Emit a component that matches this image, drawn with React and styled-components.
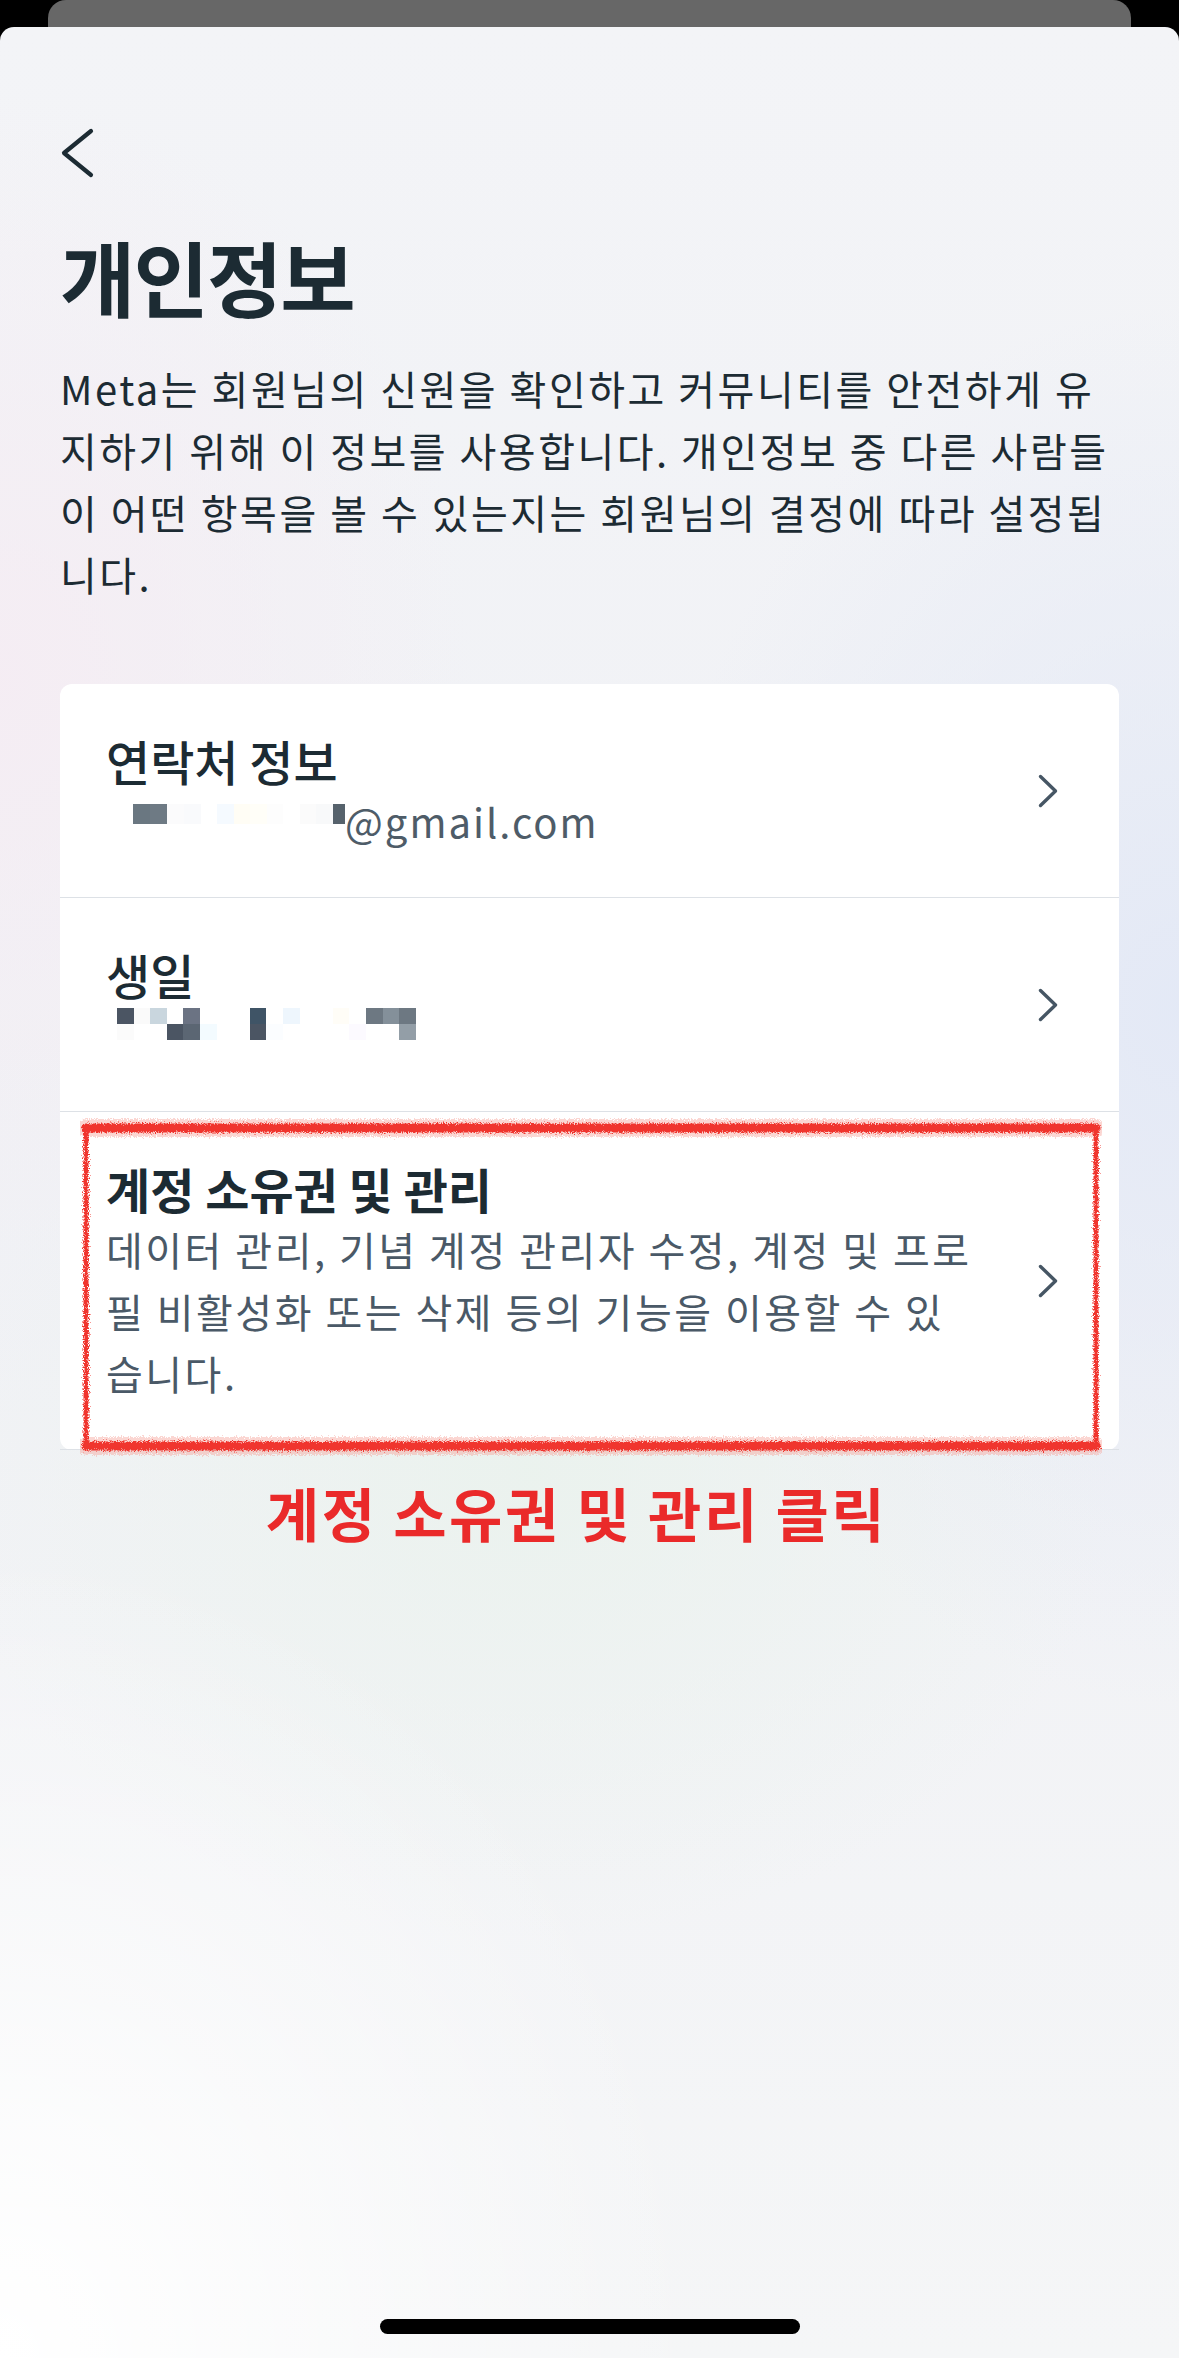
import React from "react";
import styled, { createGlobalStyle } from "styled-components";

const GlobalStyle = createGlobalStyle`
  html, body {
    margin: 0;
    padding: 0;
    background: #000;
  }
  body {
    font-family: "Noto Sans CJK KR", "Noto Sans", sans-serif;
    -webkit-font-smoothing: antialiased;
  }
  #root {
    width: 1179px;
  }
`;

const Screen = styled.div`
  width: 1179px;
  height: 2358px;
  background: #000;
  display: flex;
  flex-direction: column;
  overflow: hidden;
`;

const BehindCard = styled.div`
  flex-shrink: 0;
  height: 27px;
  margin: 0 48px;
  background: #676767;
  border-radius: 18px 18px 0 0;
`;

const Sheet = styled.div`
  flex: 1;
  display: flex;
  flex-direction: column;
  padding: 100px 60px 0;
  border-radius: 14px 14px 0 0;
  background-color: #f1f2f6;
  background-image:
    radial-gradient(ellipse 60% 35% at 0% 100%, #ffffff 0%, rgba(255, 255, 255, 0) 100%),
    radial-gradient(ellipse 50% 20% at 45% 62%, rgba(234, 242, 237, 0.9) 0%, rgba(234, 242, 237, 0) 100%),
    radial-gradient(ellipse 45% 30% at 100% 42%, rgba(226, 232, 246, 0.9) 0%, rgba(226, 232, 246, 0) 100%),
    radial-gradient(ellipse 40% 25% at 0% 28%, rgba(245, 236, 243, 0.9) 0%, rgba(245, 236, 243, 0) 100%),
    linear-gradient(180deg, #f3f4f7 0%, #f0f1f5 50%, #f5f6f7 100%);
`;

const BackButton = styled.button`
  align-self: flex-start;
  width: 34px;
  height: 52px;
  padding: 0;
  border: 0;
  background: transparent;
  display: flex;
  align-items: center;
  justify-content: flex-start;
`;

const Title = styled.h1`
  margin: 52px 0 0;
  font-size: 82px;
  line-height: 90px;
  font-weight: 700;
  letter-spacing: -2px;
  color: #1c2b33;
`;

const Intro = styled.p`
  margin: 36px 0 0;
  font-size: 40px;
  line-height: 62px;
  letter-spacing: 2.5px;
  font-weight: 400;
  color: #1c2b33;
  white-space: nowrap;
`;

const Card = styled.div`
  position: relative;
  margin-top: 79px;
  background: #ffffff;
  border-radius: 12px;
  display: flex;
  flex-direction: column;
`;

const Row = styled.div`
  display: flex;
  align-items: center;
  padding: 46px 60px 45px 46px;
  border-bottom: 1px solid #dde1e6;

  &:last-child {
    border-bottom: 0;
    padding-bottom: 46px;
  }
`;

const RowText = styled.div`
  flex: 1;
  display: flex;
  flex-direction: column;
  min-width: 0;
`;

const RowTitle = styled.div`
  font-size: 48px;
  line-height: 60px;
  letter-spacing: 0px;
  font-weight: ${(p) => (p.$strong ? 600 : 500)};
  color: #1c2b33;
`;

const RowSub = styled.div`
  font-size: 40px;
  line-height: 62px;
  letter-spacing: 2.5px;
  color: #4a5967;
  white-space: nowrap;
`;

const EmailLine = styled.div`
  display: flex;
  align-items: center;
  height: 62px;
  font-size: 40px;
  letter-spacing: 2px;
  color: #4e5c68;
`;

const MosaicStrip = styled.div`
  display: flex;
  height: 20px;
  margin: 0 0 14px 27px;
`;

const StripCell = styled.div`
  width: ${(p) => p.$w}px;
  height: 100%;
  background: ${(p) => p.$c};
`;

const BirthLine = styled.div`
  height: 62px;
  padding-top: 4px;
  box-sizing: border-box;
`;

const MosaicGrid = styled.div`
  display: grid;
  grid-template-columns: repeat(18, 16.6px);
  grid-auto-rows: 16px;
  margin-left: 11px;
`;

const GridCell = styled.div`
  background: ${(p) => p.$c};
`;

const ChevronBox = styled.div`
  flex-shrink: 0;
  width: 22px;
  height: 34px;
  display: flex;
`;

const Annotation = styled.div`
  position: absolute;
  left: 20px;
  top: 434px;
  width: 1022px;
  height: 340px;
  pointer-events: none;
`;

const Caption = styled.div`
  margin-top: 27px;
  padding-right: 26px;
  text-align: center;
  font-size: 58px;
  line-height: 70px;
  font-weight: 700;
  letter-spacing: 2.5px;
  color: #ea2a2a;
`;

const HomeIndicator = styled.div`
  margin-top: auto;
  margin-bottom: 24px;
  align-self: center;
  width: 420px;
  height: 15px;
  border-radius: 8px;
  background: #000;
`;

const Chevron = () => (
  <ChevronBox>
    <svg width="22" height="34" viewBox="0 0 22 34" fill="none">
      <path
        d="M3.5 2.5 L18.5 17 L3.5 31.5"
        stroke="#465664"
        strokeWidth="3.4"
        strokeLinecap="round"
        strokeLinejoin="round"
      />
    </svg>
  </ChevronBox>
);

const emailCells = [
  { w: 17, c: "#6a7781" },
  { w: 17, c: "#6e7a84" },
  { w: 17, c: "#fbfbfc" },
  { w: 17, c: "#f9fafc" },
  { w: 16, c: "#ffffff" },
  { w: 17, c: "#f5faff" },
  { w: 16, c: "#fffdf5" },
  { w: 17, c: "#fffef8" },
  { w: 16, c: "#fdfdfd" },
  { w: 17, c: "#ffffff" },
  { w: 16, c: "#fbfbfb" },
  { w: 17, c: "#f8f9fa" },
  { w: 12, c: "#56626c" },
];

const W = "#ffffff";
const birthGrid = [
  ["#4b5563", "#fafafa", "#c9d6de", W, "#6b7383", W, W, W, "#3f5466", W, "#eef6fd", W, W, "#fffdf7", W, "#6d7882", "#84909a", "#6d7882"],
  ["#fbfbfb", W, W, "#4b5563", "#5b6673", "#f3fbff", W, W, "#4b5563", "#fbfdff", W, W, W, W, "#fcfaff", W, W, "#939ea7"],
];

const RoughBox = () => (
  <svg width="1022" height="340" viewBox="0 0 1022 340" fill="none">
    <defs>
      <filter id="pencil" x="-3%" y="-8%" width="106%" height="116%">
        <feTurbulence type="fractalNoise" baseFrequency="0.85" numOctaves="2" seed="7" result="noise" />
        <feDisplacementMap in="SourceGraphic" in2="noise" scale="7" xChannelSelector="R" yChannelSelector="G" />
      </filter>
    </defs>
    <g filter="url(#pencil)" strokeLinecap="round">
      <path d="M6 10 H1016 M6 328 H1016" stroke="#f6a39c" strokeWidth="18" opacity="0.45" />
      <path d="M6 10 H1016 M6 328 H1016" stroke="#f0352e" strokeWidth="9" />
      <path d="M6 10 V328 M1016 10 V328" stroke="#f0352e" strokeWidth="5" />
    </g>
  </svg>
);

export default function App() {
  return (
    <>
      <GlobalStyle />
      <Screen>
        <BehindCard />
        <Sheet>
          <BackButton aria-label="뒤로">
            <svg width="34" height="52" viewBox="0 0 34 52" fill="none">
              <path
                d="M31 4 L4 26 L31 48"
                stroke="#1c2b33"
                strokeWidth="4.2"
                strokeLinecap="round"
                strokeLinejoin="round"
              />
            </svg>
          </BackButton>
          <Title>개인정보</Title>
          <Intro>
            Meta는 회원님의 신원을 확인하고 커뮤니티를 안전하게 유
            <br />
            지하기 위해 이 정보를 사용합니다. 개인정보 중 다른 사람들
            <br />
            이 어떤 항목을 볼 수 있는지는 회원님의 결정에 따라 설정됩
            <br />
            니다.
          </Intro>

          <Card>
            <Row>
              <RowText>
                <RowTitle>연락처 정보</RowTitle>
                <EmailLine>
                  <MosaicStrip>
                    {emailCells.map((c, i) => (
                      <StripCell key={i} $w={c.w} $c={c.c} />
                    ))}
                  </MosaicStrip>
                  <span>@gmail.com</span>
                </EmailLine>
              </RowText>
              <Chevron />
            </Row>
            <Row>
              <RowText>
                <RowTitle>생일</RowTitle>
                <BirthLine>
                  <MosaicGrid>
                    {birthGrid.flat().map((c, i) => (
                      <GridCell key={i} $c={c} />
                    ))}
                  </MosaicGrid>
                </BirthLine>
              </RowText>
              <Chevron />
            </Row>
            <Row>
              <RowText>
                <RowTitle $strong>계정 소유권 및 관리</RowTitle>
                <RowSub>
                  데이터 관리, 기념 계정 관리자 수정, 계정 및 프로
                  <br />
                  필 비활성화 또는 삭제 등의 기능을 이용할 수 있
                  <br />
                  습니다.
                </RowSub>
              </RowText>
              <Chevron />
            </Row>
            <Annotation>
              <RoughBox />
            </Annotation>
          </Card>

          <Caption>계정 소유권 및 관리 클릭</Caption>
          <HomeIndicator />
        </Sheet>
      </Screen>
    </>
  );
}
